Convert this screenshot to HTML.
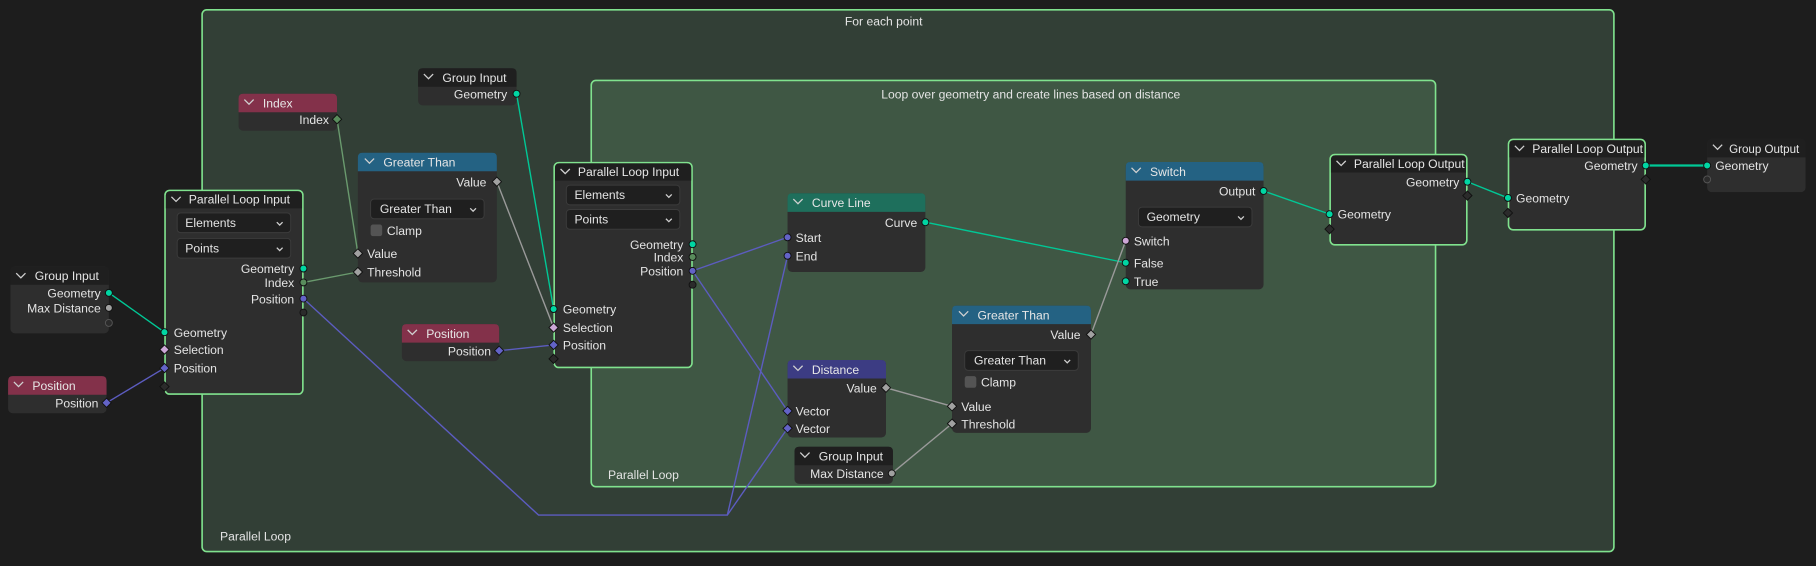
<!DOCTYPE html>
<html><head><meta charset="utf-8"><style>
html,body{margin:0;padding:0;background:#1d1d1d;width:1816px;height:566px;overflow:hidden}
svg{display:block}
text{font-family:"Liberation Sans",sans-serif;font-size:10.5px;fill:#e4e4e4}
.h{fill:#e6e6e6}
.c{fill:none;stroke:#d0d0d0;stroke-width:1.1}
.body{fill:#2e2e2e}
.dd{fill:#1f1f1f;stroke:#3c3c3c;stroke-width:0.8}
.sk{stroke:#111;stroke-width:0.8}
</style></head><body>
<svg width="1816" height="566" viewBox="0 0 1568 489" preserveAspectRatio="none">
<rect x="0" y="0" width="1568" height="489" fill="#1d1d1d"/>
<rect x="174.5" y="8.5" width="1219" height="468" rx="4" fill="#323f36" stroke="#80e28e" stroke-width="1.4"/>
<text x="763" y="22" text-anchor="middle">For each point</text>
<text x="190" y="467">Parallel Loop</text>
<rect x="510.5" y="69.5" width="729" height="351" rx="4" fill="#3f5744" stroke="#80e28e" stroke-width="1.4"/>
<text x="890" y="85" text-anchor="middle">Loop over geometry and create  lines based on distance</text>
<text x="525" y="414">Parallel Loop</text>

<g fill="none" stroke-width="1.2">
<path d="M94 253 L142 287" stroke="#00c896"/>
<path d="M92 348 L142 318" stroke="#5c5cc0"/>
<path d="M446 81 L478 267" stroke="#00c896"/>
<path d="M291 103 L309 219" stroke="#6a9a6e"/>
<path d="M262 244 L309 235" stroke="#6a9a6e"/>
<path d="M429 157 L478 283" stroke="#9a9a9a"/>
<path d="M431 303 L478 298" stroke="#5c5cc0"/>
<path d="M262 258 L465 445 L628 445 L680 221" stroke="#5c5cc0"/>
<path d="M628 445 L680 370" stroke="#5c5cc0"/>
<path d="M598 234 L680 205" stroke="#5c5cc0"/>
<path d="M598 234 L680 355" stroke="#5c5cc0"/>
<path d="M799 192 L972 227" stroke="#00c896"/>
<path d="M765 335 L822 351" stroke="#9a9a9a"/>
<path d="M770 409 L822 366" stroke="#9a9a9a"/>
<path d="M942 289 L972 208" stroke="#9a9a9a"/>
<path d="M1091 165 L1148 185" stroke="#00c896"/>
<path d="M1267 157 L1302 171" stroke="#00c896"/>
<path d="M1421 143 L1474 143" stroke="#00c896" stroke-width="2"/>
</g>

<rect x="9" y="230" width="85" height="58" rx="4" class="body"/>
<path d="M9 246 V234 Q9 230 13 230 H90 Q94 230 94 234 V246 Z" fill="#1f1f1f"/>
<path d="M14 236 L18 240 L22 236" class="c"/><text x="30" y="242" class="h">Group Input</text>
<text x="87" y="257" text-anchor="end">Geometry</text>
<text x="87" y="270" text-anchor="end">Max Distance</text>

<rect x="7" y="325" width="85" height="32" rx="4" class="body"/>
<path d="M7 341 V329 Q7 325 11 325 H88 Q92 325 92 329 V341 Z" fill="#83314a"/>
<path d="M12 330 L16 334 L20 330" class="c"/><text x="28" y="337" class="h">Position</text>
<text x="85" y="352" text-anchor="end">Position</text>

<rect x="206" y="81" width="85" height="32" rx="4" class="body"/>
<path d="M206 97 V85 Q206 81 210 81 H287 Q291 81 291 85 V97 Z" fill="#83314a"/>
<path d="M211 86 L215 90 L219 86" class="c"/><text x="227" y="93" class="h">Index</text>
<text x="284" y="107" text-anchor="end">Index</text>

<rect x="361" y="59" width="85" height="32" rx="4" class="body"/>
<path d="M361 75 V63 Q361 59 365 59 H442 Q446 59 446 63 V75 Z" fill="#1f1f1f"/>
<path d="M366 64 L370 68 L374 64" class="c"/><text x="382" y="71" class="h">Group Input</text>
<text x="438" y="85" text-anchor="end">Geometry</text>

<rect x="309" y="132" width="120" height="112" rx="4" class="body"/>
<path d="M309 148 V136 Q309 132 313 132 H425 Q429 132 429 136 V148 Z" fill="#246283"/>
<path d="M315 137 L319 141 L323 137" class="c"/><text x="331" y="144" class="h">Greater Than</text>
<text x="420" y="161" text-anchor="end">Value</text>
<rect x="320" y="172" width="98" height="17" rx="3" class="dd"/>
<text x="328" y="184">Greater Than</text><path d="M406 180 L408.5 182.5 L411 180" class="c" stroke-width="0.8"/>
<rect x="320" y="194" width="10" height="10" rx="2" fill="#545454"/><text x="334" y="203">Clamp</text>
<text x="317" y="223">Value</text>
<text x="317" y="239">Threshold</text>

<rect x="142.5" y="164.5" width="119" height="176" rx="4" class="body" stroke="#80e28e" stroke-width="1.4"/>
<path d="M143.2 180 V169 Q143.2 165.2 147 165.2 H257 Q260.8 165.2 260.8 169 V180 Z" fill="#1f1f1f"/>
<path d="M148 170 L152 174 L156 170" class="c"/><text x="163" y="176" class="h">Parallel Loop Input</text>
<rect x="153" y="184" width="98" height="17" rx="3" class="dd"/>
<text x="160" y="196">Elements</text><path d="M239 192 L241.5 194.5 L244 192" class="c" stroke-width="0.8"/>
<rect x="153" y="206" width="98" height="17" rx="3" class="dd"/>
<text x="160" y="218">Points</text><path d="M239 214 L241.5 216.5 L244 214" class="c" stroke-width="0.8"/>
<text x="254" y="236" text-anchor="end">Geometry</text>
<text x="254" y="248" text-anchor="end">Index</text>
<text x="254" y="262" text-anchor="end">Position</text>
<text x="150" y="291">Geometry</text>
<text x="150" y="306">Selection</text>
<text x="150" y="322">Position</text>

<rect x="347" y="280" width="84" height="32" rx="4" class="body"/>
<path d="M347 296 V284 Q347 280 351 280 H427 Q431 280 431 284 V296 Z" fill="#83314a"/>
<path d="M352 285 L356 289 L360 285" class="c"/><text x="368" y="292" class="h">Position</text>
<text x="424" y="307" text-anchor="end">Position</text>

<rect x="478.5" y="140.5" width="119" height="177" rx="4" class="body" stroke="#80e28e" stroke-width="1.4"/>
<path d="M479.2 156 V145 Q479.2 141.2 483 141.2 H593 Q596.8 141.2 596.8 145 V156 Z" fill="#1f1f1f"/>
<path d="M484 146 L488 150 L492 146" class="c"/><text x="499" y="152" class="h">Parallel Loop Input</text>
<rect x="489" y="160" width="98" height="17" rx="3" class="dd"/>
<text x="496" y="172">Elements</text><path d="M575 168 L577.5 170.5 L580 168" class="c" stroke-width="0.8"/>
<rect x="489" y="181" width="98" height="17" rx="3" class="dd"/>
<text x="496" y="193">Points</text><path d="M575 189 L577.5 191.5 L580 189" class="c" stroke-width="0.8"/>
<text x="590" y="215" text-anchor="end">Geometry</text>
<text x="590" y="226" text-anchor="end">Index</text>
<text x="590" y="238" text-anchor="end">Position</text>
<text x="486" y="271">Geometry</text>
<text x="486" y="287">Selection</text>
<text x="486" y="302">Position</text>

<rect x="680" y="167" width="119" height="68" rx="4" class="body"/>
<path d="M680 183 V171 Q680 167 684 167 H795 Q799 167 799 171 V183 Z" fill="#1e6f5c"/>
<path d="M685 172 L689 176 L693 172" class="c"/><text x="701" y="179" class="h">Curve Line</text>
<text x="792" y="196" text-anchor="end">Curve</text>
<text x="687" y="209">Start</text>
<text x="687" y="225">End</text>

<rect x="680" y="311" width="85" height="67" rx="4" class="body"/>
<path d="M680 327 V315 Q680 311 684 311 H761 Q765 311 765 315 V327 Z" fill="#3c3c83"/>
<path d="M685 316 L689 320 L693 316" class="c"/><text x="701" y="323" class="h">Distance</text>
<text x="757" y="339" text-anchor="end">Value</text>
<text x="687" y="359">Vector</text>
<text x="687" y="374">Vector</text>

<rect x="686" y="386" width="85" height="32" rx="4" class="body"/>
<path d="M686 402 V390 Q686 386 690 386 H767 Q771 386 771 390 V402 Z" fill="#1f1f1f"/>
<path d="M691 391 L695 395 L699 391" class="c"/><text x="707" y="398" class="h">Group Input</text>
<text x="763" y="413" text-anchor="end">Max Distance</text>

<rect x="822" y="264" width="120" height="110" rx="4" class="body"/>
<path d="M822 280 V268 Q822 264 826 264 H938 Q942 264 942 268 V280 Z" fill="#246283"/>
<path d="M828 269 L832 273 L836 269" class="c"/><text x="844" y="276" class="h">Greater Than</text>
<text x="933" y="293" text-anchor="end">Value</text>
<rect x="833" y="303" width="98" height="17" rx="3" class="dd"/>
<text x="841" y="315">Greater Than</text><path d="M919 311 L921.5 313.5 L924 311" class="c" stroke-width="0.8"/>
<rect x="833" y="325" width="10" height="10" rx="2" fill="#545454"/><text x="847" y="334">Clamp</text>
<text x="830" y="355">Value</text>
<text x="830" y="370">Threshold</text>

<rect x="972" y="140" width="119" height="110" rx="4" class="body"/>
<path d="M972 156 V144 Q972 140 976 140 H1087 Q1091 140 1091 144 V156 Z" fill="#246283"/>
<path d="M977 145 L981 149 L985 145" class="c"/><text x="993" y="152" class="h">Switch</text>
<text x="1084" y="169" text-anchor="end">Output</text>
<rect x="983" y="179" width="98" height="17" rx="3" class="dd"/>
<text x="990" y="191">Geometry</text><path d="M1069 187 L1071.5 189.5 L1074 187" class="c" stroke-width="0.8"/>
<text x="979" y="212">Switch</text>
<text x="979" y="231">False</text>
<text x="979" y="247">True</text>

<rect x="1148.5" y="133.5" width="118" height="78" rx="4" class="body" stroke="#80e28e" stroke-width="1.4"/>
<path d="M1149.2 149 V138 Q1149.2 134.2 1153 134.2 H1262 Q1265.8 134.2 1265.8 138 V149 Z" fill="#1f1f1f"/>
<path d="M1154 139 L1158 143 L1162 139" class="c"/><text x="1169" y="145" class="h">Parallel Loop Output</text>
<text x="1260" y="161" text-anchor="end">Geometry</text>
<text x="1155" y="189">Geometry</text>

<rect x="1302.5" y="120.5" width="118" height="78" rx="4" class="body" stroke="#80e28e" stroke-width="1.4"/>
<path d="M1303.2 136 V125 Q1303.2 121.2 1307 121.2 H1416 Q1419.8 121.2 1419.8 125 V136 Z" fill="#1f1f1f"/>
<path d="M1308 126 L1312 130 L1316 126" class="c"/><text x="1323" y="132" class="h">Parallel Loop Output</text>
<text x="1414" y="147" text-anchor="end">Geometry</text>
<text x="1309" y="175">Geometry</text>

<rect x="1474" y="120" width="85" height="46" rx="4" class="body"/>
<path d="M1474 136 V124 Q1474 120 1478 120 H1555 Q1559 120 1559 124 V136 Z" fill="#1f1f1f"/>
<path d="M1479 125 L1483 129 L1487 125" class="c"/><text x="1493" y="132" class="h" style="font-size:10px">Group Output</text>
<text x="1481" y="147">Geometry</text>

<g class="sk">
<circle cx="94" cy="253" r="3" fill="#00d6a3"/>
<circle cx="94" cy="266" r="3" fill="#a1a1a1"/>
<circle cx="94" cy="279" r="3" fill="#2b2b2b" stroke="#555"/>
<path d="M92 344 L96 348 L92 352 L88 348Z" fill="#6363c7"/>
<path d="M291 99 L295 103 L291 107 L287 103Z" fill="#598c5c"/>
<circle cx="446" cy="81" r="3" fill="#00d6a3"/>
<path d="M429 153 L433 157 L429 161 L425 157Z" fill="#a1a1a1"/>
<path d="M309 215 L313 219 L309 223 L305 219Z" fill="#a1a1a1"/>
<path d="M309 231 L313 235 L309 239 L305 235Z" fill="#a1a1a1"/>
<circle cx="262" cy="232" r="3" fill="#00d6a3"/>
<circle cx="262" cy="244" r="3" fill="#598c5c"/>
<circle cx="262" cy="258" r="3" fill="#6363c7"/>
<circle cx="262" cy="270" r="3" fill="#2b2b2b"/>
<circle cx="142" cy="287" r="3" fill="#00d6a3"/>
<path d="M142 298 L146 302 L142 306 L138 302Z" fill="#cca6d6"/>
<path d="M142 314 L146 318 L142 322 L138 318Z" fill="#6363c7"/>
<path d="M142 330 L146 334 L142 338 L138 334Z" fill="#2b2b2b"/>
<path d="M431 299 L435 303 L431 307 L427 303Z" fill="#6363c7"/>
<circle cx="598" cy="211" r="3" fill="#00d6a3"/>
<circle cx="598" cy="222" r="3" fill="#598c5c"/>
<circle cx="598" cy="234" r="3" fill="#6363c7"/>
<circle cx="598" cy="246" r="3" fill="#2b2b2b"/>
<circle cx="478" cy="267" r="3" fill="#00d6a3"/>
<path d="M478 279 L482 283 L478 287 L474 283Z" fill="#cca6d6"/>
<path d="M478 294 L482 298 L478 302 L474 298Z" fill="#6363c7"/>
<path d="M478 306 L482 310 L478 314 L474 310Z" fill="#2b2b2b"/>
<circle cx="799" cy="192" r="3" fill="#00d6a3"/>
<circle cx="680" cy="205" r="3" fill="#6363c7"/>
<circle cx="680" cy="221" r="3" fill="#6363c7"/>
<path d="M765 331 L769 335 L765 339 L761 335Z" fill="#a1a1a1"/>
<path d="M680 351 L684 355 L680 359 L676 355Z" fill="#6363c7"/>
<path d="M680 366 L684 370 L680 374 L676 370Z" fill="#6363c7"/>
<circle cx="770" cy="409" r="3" fill="#a1a1a1"/>
<path d="M942 285 L946 289 L942 293 L938 289Z" fill="#a1a1a1"/>
<path d="M822 347 L826 351 L822 355 L818 351Z" fill="#a1a1a1"/>
<path d="M822 362 L826 366 L822 370 L818 366Z" fill="#a1a1a1"/>
<circle cx="1091" cy="165" r="3" fill="#00d6a3"/>
<circle cx="972" cy="208" r="3" fill="#cca6d6"/>
<circle cx="972" cy="227" r="3" fill="#00d6a3"/>
<circle cx="972" cy="243" r="3" fill="#00d6a3"/>
<circle cx="1267" cy="157" r="3" fill="#00d6a3"/>
<path d="M1267 165 L1271 169 L1267 173 L1263 169Z" fill="#2b2b2b"/>
<circle cx="1148" cy="185" r="3" fill="#00d6a3"/>
<path d="M1148 194 L1152 198 L1148 202 L1144 198Z" fill="#2b2b2b"/>
<circle cx="1421" cy="143" r="3" fill="#00d6a3"/>
<path d="M1421 151 L1425 155 L1421 159 L1417 155Z" fill="#2b2b2b"/>
<circle cx="1302" cy="171" r="3" fill="#00d6a3"/>
<path d="M1302 180 L1306 184 L1302 188 L1298 184Z" fill="#2b2b2b"/>
<circle cx="1474" cy="143" r="3" fill="#00d6a3"/>
<circle cx="1474" cy="155" r="3" fill="#2b2b2b" stroke="#555"/>
</g>
</svg>
</body></html>
